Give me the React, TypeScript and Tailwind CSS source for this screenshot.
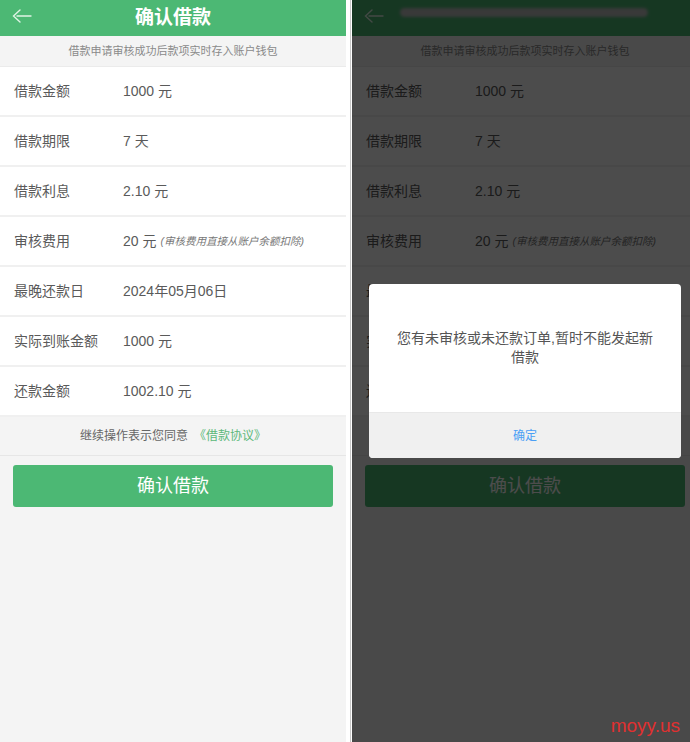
import React from "react";

const FONT = { fontFamily: '"Liberation Sans", "Noto Sans CJK SC", sans-serif' };

const ROWS: { label: string; value: string; note?: string }[] = [
  { label: "借款金额", value: "1000 元" },
  { label: "借款期限", value: "7 天" },
  { label: "借款利息", value: "2.10 元" },
  { label: "审核费用", value: "20 元", note: "(审核费用直接从账户余额扣除)" },
  { label: "最晚还款日", value: "2024年05月06日" },
  { label: "实际到账金额", value: "1000 元" },
  { label: "还款金额", value: "1002.10 元" },
];

function BackArrow() {
  return (
    <svg width="20" height="14" viewBox="0 0 20 14" fill="none" stroke="#dff3e5" strokeWidth="1.4" strokeLinecap="round">
      <path d="M8 1 L1.5 7 L8 13" />
      <path d="M5 7 H19" />
    </svg>
  );
}

// 借款确认ページ本体
function LoanPage({ blurTitle = false }: { blurTitle?: boolean }) {
  return (
    <div className="relative flex h-[742px] w-[346px] shrink-0 flex-col bg-[#f4f4f4]" style={FONT}>
      {/* ヘッダー */}
      <header className="relative flex h-[36px] items-center justify-center bg-[#4cb874]">
        <div className="absolute left-[12px] top-[9px]">
          <BackArrow />
        </div>
        {blurTitle ? (
          <div className="absolute left-[48px] top-[8px] h-[9px] w-[248px] rounded-full bg-[#bfbfbf] blur-[1.5px]" />
        ) : (
          <h1 className="text-[19px] font-bold text-white">确认借款</h1>
        )}
      </header>

      <p className="flex h-[31px] items-center justify-center border-b border-[#ebebeb] text-[11px] text-[#8a8a8a]">
        借款申请审核成功后款项实时存入账户钱包
      </p>

      <ul className="bg-white">
        {ROWS.map((r) => (
          <li key={r.label} className="flex h-[50px] items-center border-b-2 border-[#f0f0f0] pt-[1px] text-[14px] text-[#5a5a5a]">
            <span className="w-[123px] pl-[14px]">{r.label}</span>
            <span>{r.value}</span>
            {r.note && <span className="ml-[4px] text-[10.5px] italic text-[#777]">{r.note}</span>}
          </li>
        ))}
      </ul>

      <p className="flex h-[39px] items-center justify-center border-b border-[#e6e6e6] text-[12px] text-[#666]">
        继续操作表示您同意
        <span className="ml-[6px] text-[#5cb87a]">《借款协议》</span>
      </p>

      <div className="px-[13px] pt-[9px]">
        <button className="flex h-[42px] w-full items-center justify-center rounded-[3px] bg-[#4cb874] text-[18px] text-white">
          确认借款
        </button>
      </div>
    </div>
  );
}

export default function App() {
  return (
    <div className="relative flex h-[742px] w-[690px] overflow-hidden bg-white">
      <LoanPage />

      <div className="ml-[4px] w-[1px] bg-[#c8c8c8]" />

      {/* 右側：ダイアログ表示状態 */}
      <div className="relative ml-[1px] h-[742px] flex-1 overflow-hidden">
        <LoanPage blurTitle />
        <div className="absolute inset-0 flex items-center justify-center bg-black/70" style={FONT}>
          <div className="ml-[8px] w-[312px] overflow-hidden rounded-[4px] bg-white">
            <div className="flex h-[128px] items-center justify-center px-[26px] text-center text-[14px] leading-[19px] text-[#555]">
              您有未审核或未还款订单,暂时不能发起新借款
            </div>
            <div className="flex h-[46px] items-center justify-center border-t border-[#e8e8e8] bg-[#f0f0f0] text-[12px] text-[#4a9ff5]">
              确定
            </div>
          </div>
        </div>
        <span className="absolute bottom-[2px] right-[10px] text-[19px] text-[#e03030]" style={FONT}>
          moyy.us
        </span>
      </div>
    </div>
  );
}
